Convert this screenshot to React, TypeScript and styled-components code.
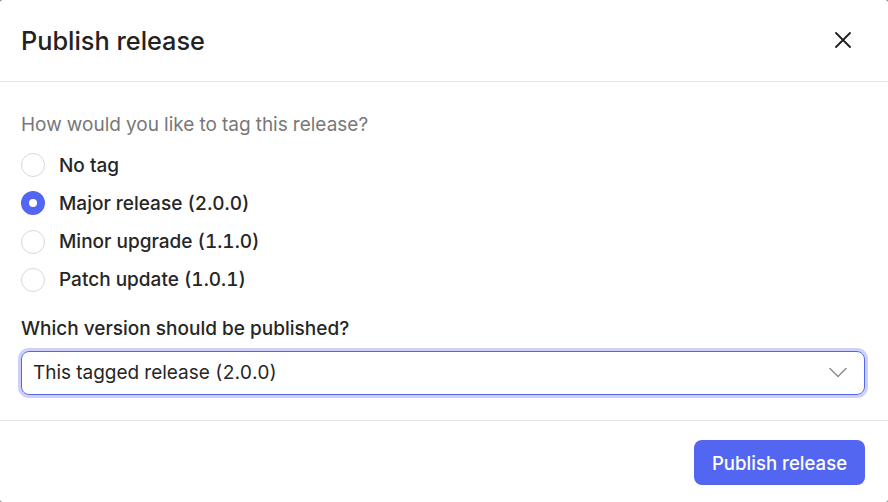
import React, { useState } from "react";
import styled, { createGlobalStyle } from "styled-components";

const Global = createGlobalStyle`
  html, body {
    margin: 0;
    padding: 0;
    background: #8a8a8a;
  }
  body {
    font-family: Inter, "Noto Sans", sans-serif;
    font-feature-settings: "tnum" 1;
    -webkit-font-smoothing: antialiased;
  }
  * { box-sizing: border-box; }
`;

const Dialog = styled.div`
  width: 888px;
  height: 502px;
  background: #fff;
  border-radius: 3px;
  display: flex;
  flex-direction: column;
  color: #262626;
  overflow: hidden;
`;

const Header = styled.header`
  flex: none;
  height: 82px;
  display: flex;
  align-items: center;
  justify-content: space-between;
  padding: 0 37px 0 21px;
  border-bottom: 1px solid #e5e5e5;
`;

const Title = styled.h2`
  margin: 0;
  font-size: 25.3px;
  font-weight: 500;
  line-height: 32px;
  color: #222;
`;

const CloseButton = styled.button`
  border: 0;
  background: none;
  padding: 0;
  width: 16px;
  height: 16px;
  margin-top: -2px;
  display: flex;
  align-items: center;
  justify-content: center;
  color: #1f1f1f;
  cursor: pointer;
`;

const Body = styled.div`
  flex: none;
  height: 339px;
  padding: 31px 23px 0 21px;
  display: flex;
  flex-direction: column;
  border-bottom: 1px solid #e5e5e5;
`;

const Prompt = styled.p`
  margin: 0 0 16px;
  font-size: 19px;
  line-height: 24px;
  color: #787878;
`;

const RadioList = styled.div`
  display: flex;
  flex-direction: column;
  gap: 14.3px;
`;

const RadioRow = styled.label`
  display: flex;
  align-items: center;
  gap: 14px;
  height: 24px;
  font-size: 19px;
  font-weight: 500;
  color: #262626;
  cursor: pointer;
`;

const RadioDot = styled.span<{ $on: boolean }>`
  width: 24px;
  height: 24px;
  border-radius: 50%;
  flex: none;
  border: ${(p) => (p.$on ? "8px solid #5266f1" : "1px solid #d9d9d9")};
  background: #fff;
`;

const FieldLabel = styled.div`
  margin-top: 25px;
  font-size: 19px;
  font-weight: 500;
  line-height: 24px;
  color: #262626;
`;

const Select = styled.div`
  margin-top: 10px;
  height: 44px;
  border: 1px solid #5266f1;
  border-radius: 8px;
  box-shadow: 0 0 0 3px #cdd0fb;
  display: flex;
  align-items: center;
  justify-content: space-between;
  padding: 0 17px 0 11px;
  font-size: 19px;
  color: #262626;
`;

const Footer = styled.footer`
  flex: 1;
  display: flex;
  align-items: flex-start;
  justify-content: flex-end;
  padding: 19px 23px 0 0;
`;

const PrimaryButton = styled.button`
  height: 45px;
  width: 171px;
  padding: 0;
  border: 0;
  border-radius: 8px;
  background: #5266f1;
  color: #fff;
  font-family: inherit;
  font-size: 18.6px;
  font-weight: 500;
  cursor: pointer;
`;

const options = [
  "No tag",
  "Major release (2.0.0)",
  "Minor upgrade (1.1.0)",
  "Patch update (1.0.1)",
];

export default function App() {
  const [selected, setSelected] = useState(1);
  return (
    <>
      <Global />
      <Dialog>
        <Header>
          <Title>Publish release</Title>
          <CloseButton aria-label="Close">
            <svg width="16" height="16" viewBox="0 0 16 16" fill="none" stroke="currentColor" strokeWidth="1.8" strokeLinecap="round">
              <path d="M1 1L15 15M15 1L1 15" />
            </svg>
          </CloseButton>
        </Header>
        <Body>
          <Prompt>How would you like to tag this release?</Prompt>
          <RadioList>
            {options.map((o, i) => (
              <RadioRow key={o} onClick={() => setSelected(i)}>
                <RadioDot $on={selected === i} />
                {o}
              </RadioRow>
            ))}
          </RadioList>
          <FieldLabel>Which version should be published?</FieldLabel>
          <Select>
            <span>This tagged release (2.0.0)</span>
            <svg width="18" height="11" viewBox="0 0 18 11" fill="none" stroke="#8c8c8c" strokeWidth="1.5" strokeLinecap="round" strokeLinejoin="round">
              <path d="M1 1.5L9 9.5L17 1.5" />
            </svg>
          </Select>
        </Body>
        <Footer>
          <PrimaryButton>Publish release</PrimaryButton>
        </Footer>
      </Dialog>
    </>
  );
}
